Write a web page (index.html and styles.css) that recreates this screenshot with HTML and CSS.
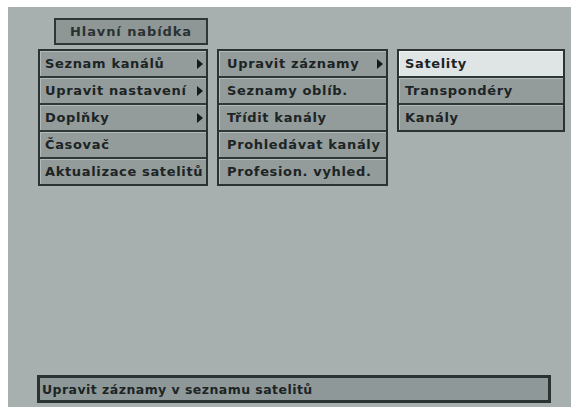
FILE: index.html
```html
<!DOCTYPE html>
<html lang="cs">
<head>
<meta charset="utf-8">
<link rel="stylesheet" href="styles.css">
</head>
<body>
<div class="screen">
  <div class="title-row">
    <div class="title">Hlavní nabídka</div>
  </div>
  <div class="menus">
    <div class="menu menu-main">
      <div class="item">Seznam kanálů<span class="arrow"></span></div>
      <div class="item">Upravit nastavení<span class="arrow"></span></div>
      <div class="item">Doplňky<span class="arrow"></span></div>
      <div class="item">Časovač</div>
      <div class="item">Aktualizace satelitů</div>
    </div>
    <div class="menu menu-sub">
      <div class="item">Upravit záznamy<span class="arrow"></span></div>
      <div class="item">Seznamy oblíb.</div>
      <div class="item">Třídit kanály</div>
      <div class="item">Prohledávat kanály</div>
      <div class="item">Profesion. vyhled.</div>
    </div>
    <div class="menu menu-third">
      <div class="item active">Satelity</div>
      <div class="item">Transpondéry</div>
      <div class="item">Kanály</div>
    </div>
  </div>
  <div class="spacer"></div>
  <div class="status">Upravit záznamy v seznamu satelitů</div>
</div>
</body>
</html>
```
FILE: styles.css
```css
html, body {
  margin: 0;
  padding: 0;
  background: #ffffff;
}
body {
  padding: 7px 0 0 8px;
  font-family: "DejaVu Sans", Verdana, sans-serif;
  font-weight: bold;
  font-size: 13px;
  letter-spacing: 0.65px;
  color: #1c2424;
}
.screen {
  width: 563px;
  height: 400px;
  background: #a8afaf;
  display: flex;
  flex-direction: column;
  box-sizing: border-box;
  padding: 11px 0 4px 30px;
}
.title-row {
  width: 170px;
  display: flex;
  justify-content: flex-end;
}
.title {
  width: 154px;
  height: 27px;
  box-sizing: border-box;
  border: 2px solid #2e3636;
  background: #8e9696;
  display: flex;
  align-items: center;
  justify-content: center;
  color: #2a3232;
  letter-spacing: 0.9px;
}
.menus {
  margin-top: 4px;
  display: flex;
  align-items: flex-start;
  gap: 9px;
}
.menu {
  border: 2px solid #2a3232;
  background: #2f3737;
  display: flex;
  flex-direction: column;
  gap: 2px;
  box-sizing: border-box;
}
.menu-main { width: 170px; }
.menu-sub { width: 171px; }
.menu-third { width: 168px; }
.item {
  height: 25px;
  box-sizing: border-box;
  background: #939b9b;
  box-shadow: inset 1px 1px 0 #b3baba;
  display: flex;
  align-items: center;
  justify-content: space-between;
  padding: 0 3px 0 5px;
  white-space: nowrap;
}
.menu-sub .item { padding-left: 8px; }
.menu-third .item { padding-left: 6px; }
.item.active {
  background: #dfe4e4;
  box-shadow: inset 1px 1px 0 #f2f5f5;
}
.arrow {
  flex: none;
  width: 0;
  height: 0;
  border-top: 5px solid transparent;
  border-bottom: 5px solid transparent;
  border-left: 6px solid #141a1a;
  margin-left: 2px;
}
.spacer { flex: 1; }
.status {
  width: 514px;
  height: 28px;
  box-sizing: border-box;
  margin-left: -1px;
  border: 3px solid #2a3232;
  background: #8f9898;
  display: flex;
  align-items: center;
  padding-left: 2px;
  white-space: nowrap;
  font-size: 12.5px;
  letter-spacing: 0.45px;
}
```
